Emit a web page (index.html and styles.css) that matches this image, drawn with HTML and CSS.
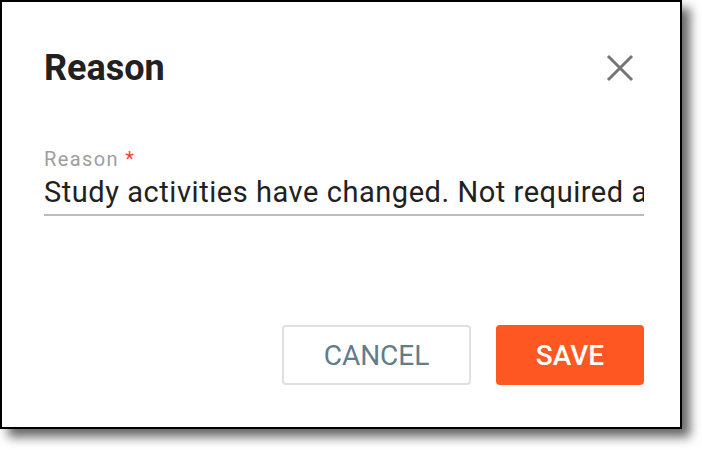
FILE: index.html
```html
<!DOCTYPE html>
<html>
<head>
<meta charset="utf-8">
<link rel="stylesheet" href="styles.css">
</head>
<body>
<div class="dialog">
  <div class="header">
    <h1 class="title">Reason</h1>
    <button class="close" aria-label="Close">
      <svg width="28" height="28" viewBox="0 0 28 28"><path d="M2 2L26 26M26 2L2 26" stroke="#757575" stroke-width="3" fill="none"/></svg>
    </button>
  </div>
  <div class="field">
    <label class="label">Reason <span class="req">*</span></label>
    <div class="input">Study activities have changed. Not required anymore</div>
  </div>
  <div class="actions">
    <button class="btn cancel">CANCEL</button>
    <button class="btn save">SAVE</button>
  </div>
</div>
</body>
</html>
```

FILE: styles.css
```css
html, body {
  margin: 0;
  padding: 0;
  background: #fff;
}
body {
  font-family: Roboto, "Liberation Sans", sans-serif;
  width: 702px;
  height: 450px;
  overflow: hidden;
}
.dialog {
  box-sizing: border-box;
  width: 682px;
  height: 429px;
  border: 2px solid #000;
  background: #fff;
  box-shadow: 8px 8px 10px rgba(0, 0, 0, 0.6);
  padding: 0 36px 0 42px;
  display: flex;
  flex-direction: column;
}
.header {
  display: flex;
  align-items: center;
  justify-content: space-between;
  height: 44px;
  margin-top: 44px;
}
.title {
  margin: 0;
  font-size: 36px;
  line-height: 44px;
  font-weight: 700;
  color: #212121;
}
.close {
  border: 0;
  background: none;
  padding: 0;
  margin-right: 10px;
  width: 28px;
  height: 28px;
  display: flex;
}
.field {
  margin-top: 57px;
  display: flex;
  flex-direction: column;
}
.label {
  font-size: 20px;
  line-height: 24px;
  letter-spacing: 1.4px;
  color: #9e9e9e;
}
.req {
  color: #f44336;
}
.input {
  font-size: 29px;
  line-height: 34px;
  letter-spacing: 0.55px;
  color: #212121;
  white-space: nowrap;
  overflow: hidden;
  margin-top: 4px;
  padding-bottom: 5px;
  border-bottom: 2px solid #bdbdbd;
}
.actions {
  margin-top: auto;
  margin-bottom: 42px;
  display: flex;
  justify-content: flex-end;
  gap: 25px;
}
.btn {
  box-sizing: border-box;
  height: 60px;
  border-radius: 4px;
  font-family: Roboto, "Liberation Sans", sans-serif;
  font-size: 28px;
  padding: 0;
}
.cancel {
  width: 189px;
  background: #fff;
  border: 2px solid #e0e0e0;
  color: #607d8b;
}
.save {
  width: 148px;
  background: #ff5722;
  border: 0;
  color: #fff;
  font-weight: 500;
}
```
